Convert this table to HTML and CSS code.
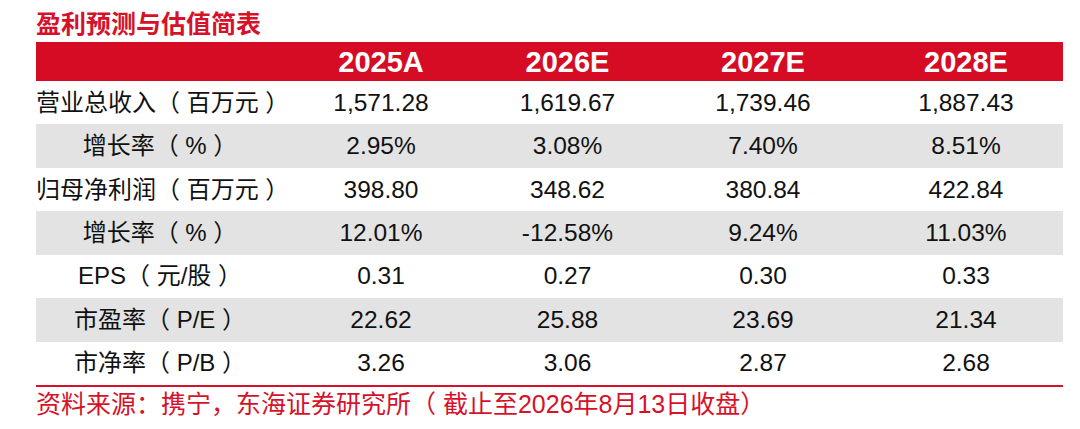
FILE: index.html
```html
<!DOCTYPE html>
<html lang="zh-CN">
<head>
<meta charset="utf-8">
<title>盈利预测与估值简表</title>
<link rel="stylesheet" href="styles.css">
</head>
<body>
<div class="page">
  <h1 class="title">盈利预测与估值简表</h1>
  <div class="table">
    <div class="row head">
      <div class="cell"></div>
      <div class="cell">2025A</div>
      <div class="cell">2026E</div>
      <div class="cell">2027E</div>
      <div class="cell">2028E</div>
    </div>
    <div class="row">
      <div class="cell label">营业总收入（ 百万元 ）</div>
      <div class="cell">1,571.28</div>
      <div class="cell">1,619.67</div>
      <div class="cell">1,739.46</div>
      <div class="cell">1,887.43</div>
    </div>
    <div class="row alt">
      <div class="cell label">增长率（ % ）</div>
      <div class="cell">2.95%</div>
      <div class="cell">3.08%</div>
      <div class="cell">7.40%</div>
      <div class="cell">8.51%</div>
    </div>
    <div class="row">
      <div class="cell label">归母净利润（ 百万元 ）</div>
      <div class="cell">398.80</div>
      <div class="cell">348.62</div>
      <div class="cell">380.84</div>
      <div class="cell">422.84</div>
    </div>
    <div class="row alt">
      <div class="cell label">增长率（ % ）</div>
      <div class="cell">12.01%</div>
      <div class="cell">-12.58%</div>
      <div class="cell">9.24%</div>
      <div class="cell">11.03%</div>
    </div>
    <div class="row">
      <div class="cell label">EPS（ 元/股 ）</div>
      <div class="cell">0.31</div>
      <div class="cell">0.27</div>
      <div class="cell">0.30</div>
      <div class="cell">0.33</div>
    </div>
    <div class="row alt">
      <div class="cell label">市盈率（ P/E ）</div>
      <div class="cell">22.62</div>
      <div class="cell">25.88</div>
      <div class="cell">23.69</div>
      <div class="cell">21.34</div>
    </div>
    <div class="row">
      <div class="cell label">市净率（ P/B ）</div>
      <div class="cell">3.26</div>
      <div class="cell">3.06</div>
      <div class="cell">2.87</div>
      <div class="cell">2.68</div>
    </div>
  </div>
  <p class="source">资料来源：携宁，东海证券研究所（ 截止至2026年8月13日收盘）</p>
</div>
</body>
</html>
```
FILE: styles.css
```css
html, body {
  margin: 0;
  padding: 0;
  background: #ffffff;
}

body {
  font-family: "Liberation Sans", "Noto Sans CJK SC", sans-serif;
  color: #111111;
}

.page {
  width: 1027px;
  padding: 9px 0 0 36px;
}

.title {
  margin: 0 0 3px 0;
  font-size: 25px;
  line-height: 30px;
  font-weight: bold;
  color: #d6112a;
}

.table {
  display: flex;
  flex-direction: column;
}

.row {
  display: grid;
  grid-template-columns: 248px 194px 179px 212px 194px;
  height: 43.43px;
  align-items: center;
  font-size: 24.5px;
  line-height: 30px;
}

.row.alt {
  background: #e3e3e3;
}

.row.head {
  height: 39px;
  background: #d50c24;
  color: #ffffff;
  font-size: 29px;
  font-weight: bold;
}

.cell {
  text-align: center;
  white-space: nowrap;
}

.cell.label {
  font-size: 24px;
}

.source {
  margin: 0;
  border-top: 2px solid #d6112a;
  padding-top: 2px;
  font-size: 25px;
  line-height: 30px;
  color: #d6112a;
  white-space: nowrap;
}
```
